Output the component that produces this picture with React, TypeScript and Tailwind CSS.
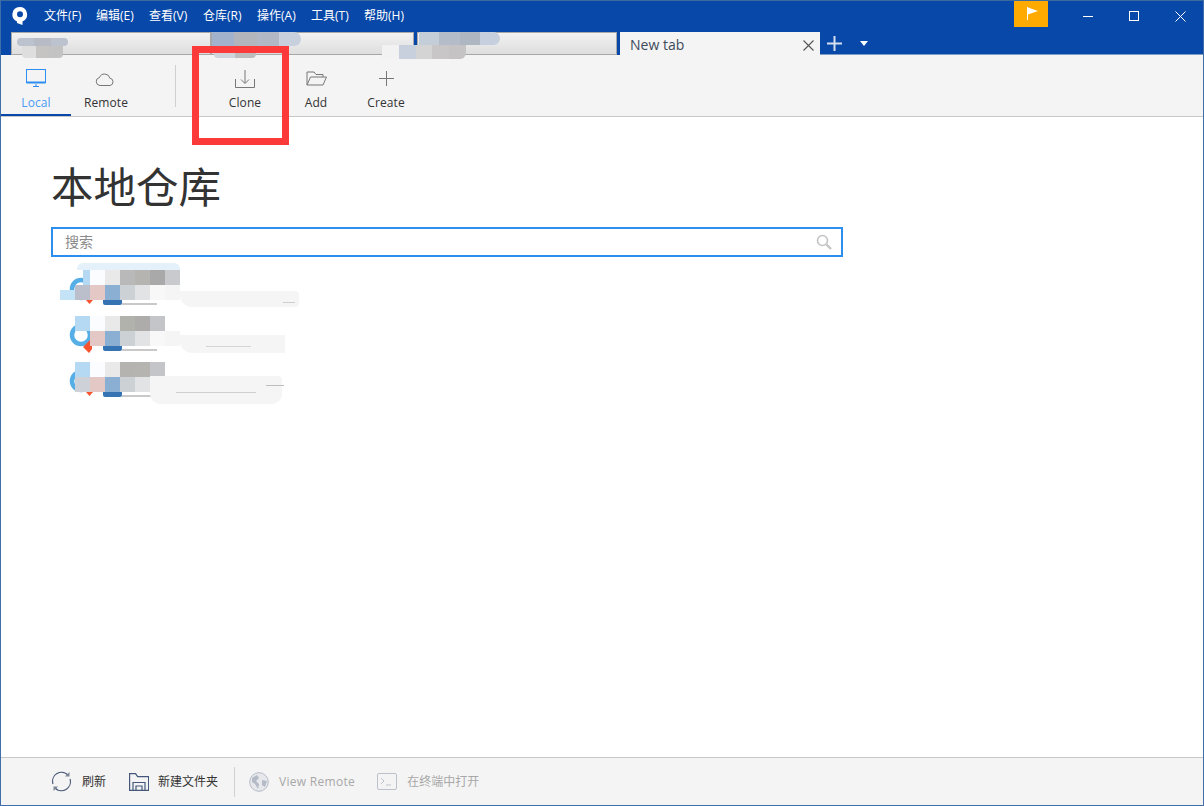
import React from "react";

function Mosaic({ cells, size = 15 }: { cells: string[]; size?: number }) {
  return (
    <div className="flex">
      {cells.map((c, i) => (
        <div key={i} className="shrink-0" style={{ width: size, height: size, background: c }} />
      ))}
    </div>
  );
}

function Blur({ className, colors }: { className: string; colors: string[] }) {
  return (
    <div className={`absolute flex overflow-hidden ${className}`}>
      {colors.map((c, i) => (
        <div key={i} className="h-full flex-1" style={{ background: c }} />
      ))}
    </div>
  );
}

type Row = { top: string[]; bottom: string[]; washClass: string; arrowBig?: boolean; extra?: React.ReactNode };

function RepoRow({ top, bottom, washClass, arrowBig, extra }: Row) {
  return (
    <div className="relative h-[46px] w-[300px]">
      <svg className="absolute left-[18px] top-[6px]" width="24" height="26" viewBox="0 0 24 26">
        <circle cx="12" cy="13" r="9" fill="none" stroke="#55aee6" strokeWidth="4.5" />
      </svg>
      <svg className="absolute left-[31px] top-[24px]" width="14" height="14" viewBox="0 0 14 14">
        {arrowBig ? <path d="M8 0L1 7l6 6 3-4V3z" fill="#f7532e" /> : <path d="M4 6h7l-3.500 4z" fill="#f7532e" />}
      </svg>
      <div className="absolute left-[52px] top-[30px] h-[5px] w-[19px] rounded-b-[2px] bg-[#3573b3]" />
      <div className="absolute left-[71px] top-[33px] h-[2px] w-[35px] bg-[#c9c9c9]" />
      <div className="absolute left-[24px] top-0 flex flex-col">
        <Mosaic cells={top} />
        <Mosaic cells={bottom} />
      </div>
      <div className={`absolute bg-[#f5f5f5] ${washClass}`} />
      {extra}
    </div>
  );
}

function Tab({ w }: { w: string }) {
  return <div className={`h-[23px] ${w} border border-[#a8a8a8] bg-gradient-to-b from-[#f2f2f2] to-[#dedede]`} />;
}

function ToolItem({ label, icon, active, className }: { label: string; icon: React.ReactNode; active?: boolean; className?: string }) {
  return (
    <div className={`flex h-[61px] w-[70px] flex-col items-center border-b-2 pt-[13px] ${active ? "border-[#0848a8]" : "border-transparent"} ${className ?? ""}`}>
      <div className="flex h-[21px] items-center justify-center">{icon}</div>
      <span className={`mt-[5px] text-[12px] leading-[18px] tracking-[0.1px] ${active ? "text-[#4a9bf5]" : "text-[#333]"}`}>{label}</span>
    </div>
  );
}

export default function App() {
  const menus: [string, string][] = [
    ["文件(F)", "w-[52px]"],
    ["编辑(E)", "w-[53px]"],
    ["查看(V)", "w-[54px]"],
    ["仓库(R)", "w-[54px]"],
    ["操作(A)", "w-[54px]"],
    ["工具(T)", "w-[53px]"],
    ["帮助(H)", "w-[40px]"],
  ];
  return (
    <div
      className="relative flex h-[806px] w-[1204px] flex-col overflow-hidden border-x border-b border-[#3f6ea8] bg-white"
      style={{ fontFamily: '"Open Sans", "Noto Sans CJK SC", sans-serif' }}
    >
      {/* Title bar */}
      <div className="h-[55px] shrink-0 border-t border-[#3d6a9c] bg-[#0848a8]">
        <div className="flex h-[31px] items-start">
          <svg className="ml-[10px] mt-[5px] shrink-0" width="17" height="20" viewBox="0 0 17 20">
            <path d="M8.500 1a7.500 7.500 0 0 1 3 14.400V19L6 17v-1.600A7.500 7.500 0 0 1 8.500 1z" fill="#fff" />
            <circle cx="9" cy="8.300" r="3" fill="#0848a8" />
          </svg>
          <div className="ml-[16px] flex w-[360px] pt-[6px]">
            {menus.map(([m, w]) => (
              <span key={m} className={`${w} shrink-0 whitespace-nowrap text-[12px] leading-[18px] text-white`}>{m}</span>
            ))}
          </div>
          <div className="ml-[610px] flex h-[26px] w-[34px] shrink-0 items-center justify-center bg-[#ffaa00]">
            <svg width="14" height="16" viewBox="0 0 14 16">
              <path d="M3.500 1v13" stroke="#fff" strokeWidth="1" />
              <path d="M4 1.500l10 3.500-10 3.500z" fill="#fff" />
            </svg>
          </div>
          <div className="ml-[17px] flex">
            <div className="flex h-[30px] w-[46px] items-center justify-center">
              <div className="h-px w-[10px] bg-white" />
            </div>
            <div className="flex h-[30px] w-[46px] items-center justify-center">
              <div className="h-[10px] w-[10px] border border-white" />
            </div>
            <div className="flex h-[30px] w-[46px] items-center justify-center">
              <svg width="11" height="11" viewBox="0 0 11 11"><path d="M.5.5l10 10M10.500.5l-10 10" stroke="#fff" strokeWidth="1" /></svg>
            </div>
          </div>
        </div>
        {/* Tabs */}
        <div className="flex items-end pl-[10px]">
          <Tab w="w-[200px]" />
          <Tab w="w-[203px]" />
          <div className="w-[3px]" />
          <Tab w="w-[200px]" />
          <div className="w-[3px]" />
          <div className="flex h-[23px] w-[200px] items-center justify-between bg-[#f4f4f4] pl-[10px] pr-[6px] pt-[3px]">
            <span className="text-[14px] leading-[20px] text-[#3c4a5a]">New tab</span>
            <svg width="11" height="11" viewBox="0 0 11 11"><path d="M.5.5l10 10M10.500.5l-10 10" stroke="#555" strokeWidth="1.100" /></svg>
          </div>
          <div className="flex h-[23px] flex-1 items-center border-b border-[#7f9cc4]">
            <div className="flex w-[29px] justify-center">
              <svg width="15" height="15" viewBox="0 0 15 15"><path d="M7.500 0v15M0 7.500h15" stroke="#d5dff0" strokeWidth="2" /></svg>
            </div>
            <div className="flex w-[30px] justify-center">
              <svg width="8" height="5" viewBox="0 0 8 5"><path d="M0 0h8L4 5z" fill="#fff" /></svg>
            </div>
          </div>
        </div>
      </div>

      {/* Toolbar */}
      <div className="flex h-[62px] shrink-0 items-start border-b border-[#c8c8c8] bg-[#f4f4f4]">
        <ToolItem
          active
          label="Local"
          icon={
            <svg width="20" height="19" viewBox="0 0 20 19" fill="none" stroke="#2b8ef0">
              <rect x=".5" y=".5" width="19" height="13" />
              <path d="M.5 13.500h19" strokeWidth="2" />
              <path d="M7 17.500h6M10 15v2" />
            </svg>
          }
        />
        <ToolItem
          label="Remote"
          icon={
            <svg className="mr-[2px]" width="20" height="14" viewBox="0 0 20 14" fill="none" stroke="#777">
              <path d="M5 13.500a4 4 0 0 1-.6-7.900 5.500 5.500 0 0 1 10.500.6 3.700 3.700 0 0 1 .1 7.300z" />
            </svg>
          }
        />
        <div className="ml-[34px] mt-[10px] h-[42px] w-px bg-[#d0d0d0]" />
        <ToolItem
          className="ml-[34px]"
          label="Clone"
          icon={
            <svg width="20" height="18" viewBox="0 0 20 18" fill="none" stroke="#777">
              <path d="M.5 9v8.500h19V9" />
              <path d="M10 0v13M6 9.500l4 4 4-4" />
            </svg>
          }
        />
        <ToolItem
          className="ml-px"
          label="Add"
          icon={
            <svg width="21" height="15" viewBox="0 0 21 15" fill="none" stroke="#777">
              <path d="M1 14V1h7l2 2.500h7V6" />
              <path d="M1 14l3.500-8h16L17 14z" />
            </svg>
          }
        />
        <ToolItem
          label="Create"
          icon={
            <svg width="15" height="15" viewBox="0 0 15 15"><path d="M7.500 0v15M0 7.500h15" stroke="#777" strokeWidth="1" /></svg>
          }
        />
      </div>

      {/* Main */}
      <div className="flex-1 pl-[50px] pr-[360px] pt-[38px]">
        <h1 className="text-[42.500px] font-normal leading-[60px] text-[#333]" style={{ fontFamily: '"Noto Sans CJK SC", sans-serif' }}>本地仓库</h1>
        <div className="mt-[12px] flex h-[30px] w-[792px] items-center justify-between border-2 border-[#2b8ef0] pl-[12px] pr-[9px]">
          <span className="text-[14px] leading-[20px] text-[#8a8a8a]">搜索</span>
          <svg width="16" height="16" viewBox="0 0 16 16" fill="none" stroke="#c4c4c4">
            <circle cx="6.500" cy="6.500" r="5" strokeWidth="1.600" />
            <path d="M10.500 10.500L15 15" strokeWidth="2.400" />
          </svg>
        </div>
        <div className="mt-[13px] flex flex-col">
          <RepoRow
            washClass="left-[129px] top-[21px] h-[16px] w-[119px] rounded-r-[4px] rounded-bl-[12px]"
            top={["transparent", "#fafcff", "#e9e9e9", "#b9b9b9", "#b5b4b1", "#aaa9a9", "#c9cacd"]}
            bottom={["#bbbfcb", "#e4c8c6", "#8baed3", "#ccd1d6", "#e2e3e4", "#f8f8f8", "#f5f5f5"]}
            extra={
              <>
                <div className="absolute left-[26px] top-[-7px] h-[7px] w-[103px] rounded-t-[6px] bg-[#e4f1fb]" />
                <div className="absolute left-[32px] top-0 h-[15px] w-[7px] bg-[#b5d9f2]" />
                <div className="absolute left-[9px] top-[20px] h-[10px] w-[15px] bg-[#c5e3f7]" />
                <div className="absolute left-[232px] top-[32px] h-px w-[12px] bg-[#cfcfcf]" />
              </>
            }
          />
          <RepoRow
            arrowBig
            washClass="left-[129px] top-[19px] h-[18px] w-[105px] rounded-bl-[12px]"
            top={["#b5d9f2", "#fafcff", "#e9e9e9", "#b2b2ad", "#aeabab", "#c4c5c9", "#ffffff"]}
            bottom={["transparent", "#e4c8c6", "#8baed3", "#ccd1d6", "#e2e3e4", "#f8f8f8", "#f5f5f5"]}
            extra={<div className="absolute left-[155px] top-[30px] h-px w-[45px] bg-[#d4d4d4]" />}
          />
          <RepoRow
            washClass="left-[99px] top-[14px] h-[28px] w-[132px] rounded-b-[10px] rounded-tr-[4px]"
            top={["#b5d9f2", "#fafcff", "#e9e9e9", "#b5b3b0", "#b6b4b1", "#c4c5c9", "#ffffff"]}
            bottom={["#cfd1d9", "#e4c8c6", "#8baed3", "#ccd1d6", "#e2e3e4", "#f8f8f8", "#f5f5f5"]}
            extra={
              <>
                <div className="absolute left-[125px] top-[30px] h-px w-[80px] bg-[#cfcfcf]" />
                <div className="absolute left-[215px] top-[23px] h-px w-[18px] bg-[#bdbdbd]" />
              </>
            }
          />
        </div>
      </div>

      {/* Footer */}
      <div className="flex h-[48px] shrink-0 items-center border-t border-[#c8c8c8] bg-[#f4f4f4] pl-[50px] text-[12px]">
        <svg width="21" height="21" viewBox="0 0 21 21" fill="none" stroke="#4a5a78" strokeWidth="1.200">
          <path d="M2 13A9 9 0 0 1 17 4" />
          <path d="M19 8a9 9 0 0 1-15 9" />
          <path d="M18.500 1v4.500H14z" fill="#7d8794" stroke="none" />
          <path d="M2.500 20v-4.500H7z" fill="#7d8794" stroke="none" />
        </svg>
        <span className="ml-[10px] text-[#333]">刷新</span>
        <svg className="ml-[23px]" width="20" height="18" viewBox="0 0 20 18" fill="none" stroke="#45587c" strokeWidth="1.200">
          <path d="M.6.6h6l2 3h11v13.800H.6z" />
          <path d="M4 17V9.500h12V17M7 17v-4h6v4" />
        </svg>
        <span className="ml-[9px] text-[#333]">新建文件夹</span>
        <div className="ml-[16px] h-[30px] w-px bg-[#d0d0d0]" />
        <svg className="ml-[14px]" width="20" height="20" viewBox="0 0 20 20">
          <circle cx="10" cy="10" r="9.300" fill="#e6e8ec" stroke="#b4bac6" />
          <path d="M3 6l5-3 2 3-3 3 3 3-1 5-3-5-3-2zM13 8l5 1-2 6-3-2z" fill="#b4bac6" />
        </svg>
        <span className="ml-[10px] tracking-[0.3px] text-[#a8a8a8]">View Remote</span>
        <svg className="ml-[22px]" width="20" height="17" viewBox="0 0 20 17" fill="none" stroke="#bcc2cc">
          <rect x=".5" y=".5" width="19" height="16" rx="1.500" />
          <path d="M4 5l3 3-3 3M9 12h5" />
        </svg>
        <span className="ml-[10px] text-[#a8a8a8]">在终端中打开</span>
      </div>

      {/* Mosaic smudges lying over the tab strip */}
      <Blur className="left-[16px] top-[38px] h-[8px] w-[51px] rounded-full" colors={["#bcc2ce", "#b6bbc6", "#bcc2ce"]} />
      <Blur className="left-[21px] top-[46px] h-[12px] w-[41px] rounded-b-[4px]" colors={["#dedede", "#c5c4c3", "#c3c3c3"]} />
      <Blur className="left-[211px] top-[32px] h-[14px] w-[89px] rounded-r-full" colors={["#a2b2cc", "#b3b5bc", "#b1b7c4", "#c8d0de"]} />
      <Blur className="left-[213px] top-[46px] h-[12px] w-[42px] rounded-b-[4px]" colors={["#d0d4dc", "#bdbdbd"]} />
      <Blur className="left-[418px] top-[32px] h-[13px] w-[81px] rounded-r-full" colors={["#c4ced9", "#b4bcc9", "#aeb6c2", "#c6cfdd"]} />
      <Blur className="left-[381px] top-[45px] h-[14px] w-[84px] rounded-br-[6px]" colors={["#f2f2f2", "#c7d0dc", "#d4d4d4", "#c8c6c6", "#c5c3c3"]} />

      {/* Annotation */}
      <div className="absolute left-[191px] top-[46px] h-[99px] w-[97px] border-[7px] border-[#fd3a3a]" />
    </div>
  );
}
